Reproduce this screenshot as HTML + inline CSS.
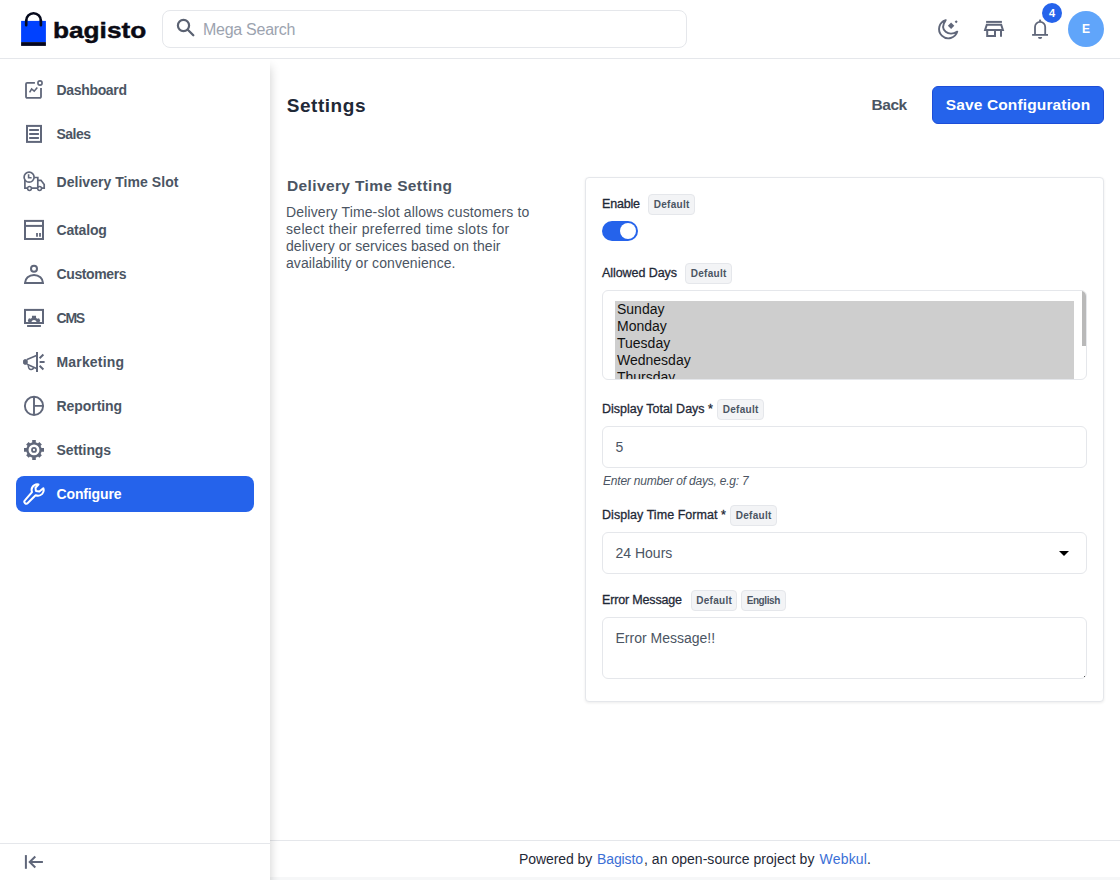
<!DOCTYPE html>
<html lang="en">
<head>
<meta charset="utf-8">
<title>Configure</title>
<style>
*{box-sizing:border-box;margin:0;padding:0}
html,body{width:1120px;height:880px;overflow:hidden;background:#fff}
body{font-family:"Liberation Sans",sans-serif;color:#1f2937;position:relative}
.abs{position:absolute}
#hdr{position:absolute;left:0;top:0;width:1120px;height:59px;background:#fff;border-bottom:1px solid #e5e7eb;z-index:5}
#logotxt{position:absolute;left:53px;top:16px;font-weight:bold;font-size:22.500px;color:#0b0b14;line-height:30px;-webkit-text-stroke:.45px #0b0b14;transform:scaleX(1.165);transform-origin:0 0;letter-spacing:0px;white-space:nowrap}
#search{position:absolute;left:162px;top:10px;width:525px;height:38px;border:1px solid #e5e7eb;border-radius:8px;background:#fff}
#search span{position:absolute;left:40px;top:9px;font-size:16px;line-height:19px;color:#9ca3af;white-space:nowrap;letter-spacing:-.27px}
#badge{position:absolute;left:1042px;top:3px;width:20px;height:20px;border-radius:50%;background:#2563eb;color:#fff;font-size:11px;font-weight:bold;line-height:20px;text-align:center}
#avatar{position:absolute;left:1068px;top:11px;width:36px;height:36px;border-radius:50%;background:#60a5fa;color:#fff;font-size:12px;font-weight:bold;line-height:36px;text-align:center}
#side{position:absolute;left:0;top:59px;width:270px;height:821px;background:#fff;box-shadow:0 8px 10px 0 rgba(0,0,0,.2);z-index:4}
.nav{position:absolute;left:16px;width:238px;height:36px;border-radius:8px}
.nav b{position:absolute;left:40.500px;top:9px;font-size:14px;line-height:18px;color:#4b5563;font-weight:bold;white-space:nowrap}
.nav svg{position:absolute;left:6px;top:5px;width:24px;height:24px}
.nav.on{background:#2563eb}
.nav.on b{color:#fff}
#sidefoot{position:absolute;left:0;top:784px;width:270px;height:37px;border-top:1px solid #e5e7eb;background:#fff}
#title{position:absolute;left:286.700px;top:94px;font-size:19px;font-weight:bold;line-height:24px;color:#1f2937;letter-spacing:.55px;white-space:nowrap}
#back{position:absolute;left:871.500px;top:95px;font-size:15.500px;font-weight:bold;line-height:20px;color:#4b5563;letter-spacing:-.45px;white-space:nowrap}
#save{position:absolute;left:932px;top:86px;width:172px;height:38px;border-radius:6px;background:#2563eb;border:1px solid #1d4ed8;color:#fff;font-size:15.500px;font-weight:bold;line-height:36px;text-align:center;white-space:nowrap;letter-spacing:.14px}
#sect{position:absolute;left:287px;top:176px;font-size:15.500px;font-weight:bold;line-height:20px;color:#4b5563;letter-spacing:.38px;white-space:nowrap}
#desc{position:absolute;left:286px;top:204px;width:280px;font-size:14px;line-height:17px;color:#4b5563;white-space:nowrap}
#desc span{display:block}
#card{position:absolute;left:585px;top:177px;width:519px;height:525px;border:1px solid #e5e7eb;border-radius:4px;background:#fff;box-shadow:0 1px 3px rgba(0,0,0,.08)}
.lbl{position:absolute;left:602px;font-size:12.500px;line-height:16px;color:#1f2937;white-space:nowrap;-webkit-text-stroke:.3px #1f2937}
.tag{position:absolute;height:21px;border:1px solid #e5e7eb;background:#f3f4f6;border-radius:4px;font-size:10px;font-weight:bold;line-height:19px;color:#4b5563;text-align:center;letter-spacing:.3px;text-indent:.3px}
.inp{position:absolute;left:602px;width:485px;border:1px solid #e5e7eb;border-radius:6px;background:#fff;font-size:14px;color:#4b5563}
.inp span{position:absolute;left:12.500px;top:11px;line-height:18px;white-space:nowrap}
#lbtxt{font-size:14px;line-height:17px;color:#111;white-space:nowrap}
#hint{font-size:12px;line-height:16px;font-style:italic;color:#4b5563;white-space:nowrap;letter-spacing:-.21px}
#foot{position:absolute;left:270px;top:840px;width:850px;height:40px;border-top:1px solid #e5e7eb;background:#fff;font-size:14px;line-height:36px;color:#1f2937;white-space:nowrap}
#foot span{position:absolute;top:0}
#foot i{font-style:normal;color:#3b6fd6}
#strip{position:absolute;left:270px;top:877px;width:850px;height:3px;background:#f6f7f8}
</style>
</head>
<body>
<div id="hdr">
  <svg class="abs" style="left:14px;top:5px" width="48" height="48" viewBox="0 0 48 48">
    <path d="M12.200 20.500V15.650a7.350 7.350 0 0 1 14.700 0V20.500" fill="none" stroke="#060a1c" stroke-width="2.600" stroke-linecap="round"/>
    <rect x="7.100" y="15.900" width="24.800" height="21.200" fill="#0041ff"/>
    <rect x="7.100" y="37.100" width="24.800" height="3.800" fill="#04061f"/>
    <path d="M12.200 15.900V20.300M26.900 15.900V20.300" fill="none" stroke="#060a1c" stroke-width="2.600" stroke-linecap="round"/>
  </svg>
  <div id="logotxt">bagisto</div>
  <div id="search">
    <svg class="abs" style="left:11.200px;top:5.200px" width="24" height="24" viewBox="0 0 24 24"><circle cx="9.5" cy="9.5" r="5.6" fill="none" stroke="#5b6272" stroke-width="2.2"/><path d="M13.800 13.800L19.300 19.300" stroke="#5b6272" stroke-width="2.300" stroke-linecap="round"/></svg>
    <span>Mega Search</span>
  </div>
  <svg class="abs" style="left:936px;top:17px" width="24" height="24" viewBox="0 0 24 24" fill="none" stroke="#60677a" stroke-width="1.9" stroke-linejoin="round"><path d="M9.700 3.100A9.300 9.300 0 1 0 21.300 14.600C13 20 2.500 13.500 9.700 3.100Z"/><path d="M15.100 5.500l3.200 3.200-3.200 3.200-3.200-3.200z" fill="#60677a" stroke="none"/><path d="M20.200 3.200l1.500 1.500-1.500 1.500-1.500-1.500z" fill="#60677a" stroke="none"/></svg>
  <svg class="abs" style="left:982px;top:17px" width="24" height="24" viewBox="0 0 24 24" fill="none" stroke="#60677a" stroke-width="2"><path d="M4.100 4.900h15.800"/><path d="M4.800 7.800h14.400l1.700 5.100H3.100z"/><path d="M5.200 12.900v6h7.800v-6M19 12.900v6.900"/></svg>
  <svg class="abs" style="left:1028px;top:17px" width="24" height="24" viewBox="0 0 24 24" fill="none" stroke="#60677a" stroke-width="1.8"><path d="M7 17.900V10a5.100 5.100 0 0 1 10.200 0v7.900"/><path d="M12.100 2.600v2.200" stroke-width="2"/><path d="M4.100 17.900H20"/><path d="M10 20a2.100 2.100 0 0 0 4.200 0z" fill="#60677a" stroke="none"/></svg>
  <div id="badge">4</div>
  <div id="avatar">E</div>
</div>

<div id="side">
  <div class="nav" style="top:13px"><svg viewBox="0 0 24 24" fill="none" stroke="#60677a" stroke-width="1.8"><path d="M12.9 5.9H5.2a1.2 1.2 0 0 0-1.2 1.2v12.6a1.2 1.2 0 0 0 1.2 1.2h12.6a1.2 1.2 0 0 0 1.2-1.2V10.9"/><circle cx="18" cy="6" r="2.1" stroke-width="1.6"/><path d="M7.6 15.3l2-3.3 2.6 2.2 3.1-3.7" stroke-width="1.6"/></svg><b style="letter-spacing:-0.33px">Dashboard</b></div>
  <div class="nav" style="top:57px"><svg viewBox="0 0 24 24" fill="none" stroke="#60677a" stroke-width="2"><rect x="5" y="4.9" width="14" height="16"/><path d="M7.2 9h9.7M7.2 13h9.7M7.2 17h9.7"/></svg><b style="letter-spacing:-0.52px">Sales</b></div>
  <div class="nav" style="top:105px"><svg viewBox="0 0 24 24" fill="none" stroke="#60677a" stroke-width="1.7"><circle cx="7.1" cy="8.2" r="5"/><path d="M6.6 5.3v3.4h3" stroke-width="1.6"/><path d="M2.9 11v8.1h2.6M9.5 19.1h6.1M12 8.500h3.800v10.600M15.800 11.300h3.200l3.200 4.200v3.600h-2.600"/><circle cx="7.5" cy="19.5" r="1.9" stroke-width="1.5"/><circle cx="17.6" cy="19.5" r="1.9" stroke-width="1.5"/></svg><b style="letter-spacing:0.045px">Delivery Time Slot</b></div>
  <div class="nav" style="top:153px"><svg viewBox="0 0 24 24" fill="none" stroke="#60677a" stroke-width="2"><rect x="3" y="3.9" width="18" height="18.1"/><path d="M3 8.9h18"/><path d="M15 16v3.8M18 16v3.8" stroke-width="1.8"/></svg><b style="letter-spacing:-0.16px">Catalog</b></div>
  <div class="nav" style="top:197px"><svg viewBox="0 0 24 24" fill="none" stroke="#60677a" stroke-width="2"><circle cx="12" cy="7.8" r="3"/><path d="M3 22A9 8.1 0 0 1 21 22Z" stroke-linejoin="miter"/></svg><b style="letter-spacing:-0.39px">Customers</b></div>
  <div class="nav" style="top:241px"><svg viewBox="0 0 24 24" fill="none" stroke="#60677a" stroke-width="2"><rect x="3" y="4.9" width="18" height="13.1"/><path d="M5.1 21h13.8"/><path transform="translate(12 18) scale(1.2) translate(-12 -18)" d="M7.6 17.5l-.8-1.6 1-1.9 1.6.4.9-.7V12h3.4v1.7l.9.7 1.6-.4 1 1.9-.8 1.6h-2.3a2.1 2.1 0 0 0-4.2 0z" fill="#60677a" stroke="none"/></svg><b style="letter-spacing:-1.2px">CMS</b></div>
  <div class="nav" style="top:285px"><svg viewBox="0 0 24 24" fill="none" stroke="#60677a" stroke-width="2"><path d="M15 3.1v19.8"/><rect x="1.6" y="10.7" width="3.6" height="4.5" rx="1" fill="#60677a" stroke-width="1"/><path d="M5 10.6l9.5-4M5 15.3l9.5 4.1" stroke-width="1.6"/><path d="M6.4 16.4c-.4 2.6 1.2 4.3 2.9 4.1 1.2-.1 2-.8 2.5-1.9" stroke-width="1.5"/><path d="M17.6 9.2l3.8-3.6M17.6 13h5M17.6 16.8l3.8 3.6"/></svg><b style="letter-spacing:0.17px">Marketing</b></div>
  <div class="nav" style="top:329px"><svg viewBox="0 0 24 24" fill="none" stroke="#60677a" stroke-width="1.9"><circle cx="12" cy="12.9" r="9.1"/><path d="M12 3.8v18.2M12 12.9h9.1"/></svg><b style="letter-spacing:-0.06px">Reporting</b></div>
  <div class="nav" style="top:373px"><svg viewBox="0 0 24 24" fill="none" stroke="#60677a"><circle cx="12" cy="12.9" r="6.6" stroke-width="2.3"/><circle cx="12" cy="12.9" r="2" stroke-width="1.8"/><g stroke-width="3.6"><path d="M12 2.9v3.2M12 19.7v3.2M2 12.9h3.2M18.8 12.9h3.2"/></g><g stroke-width="3.6"><path d="M5.4 6.3l2 2M16.6 17.5l2 2M18.6 6.3l-2 2M7.4 17.5l-2 2"/></g></svg><b style="letter-spacing:-0.09px">Settings</b></div>
  <div class="nav on" style="top:417px"><svg viewBox="0 0 24 24" fill="none" stroke="#fff" stroke-width="2" stroke-linejoin="round" stroke-linecap="round"><path d="M10 11.1C9.2 8.6 10 5.6 12.5 4.1c1.3-.8 2.8-.9 4-.6l-3 3.2.4 3.3 3.5.4 3.9-3.2c.7 1.8.6 3.8-1.1 5.700-1.600 1.700-4.200 2.200-6.600 1.400L5.800 22A1.900 1.900 0 0 1 2.900 19.400Z"/></svg><b style="letter-spacing:-0.14px">Configure</b></div>
  <div id="sidefoot"><svg class="abs" style="left:22px;top:6px" width="24" height="24" viewBox="0 0 24 24" fill="none" stroke="#60677a" stroke-width="2"><path d="M3.900 5.100v13.700"/><path d="M20.900 12H8M13.300 6.500L7.700 12l5.600 5.500" stroke-linejoin="miter"/></svg></div>
</div>

<div id="title">Settings</div>
<div id="back">Back</div>
<div id="save">Save Configuration</div>
<div id="sect">Delivery Time Setting</div>
<div id="desc"><span style="letter-spacing:.14px">Delivery Time-slot allows customers to</span><span style="letter-spacing:.32px">select their preferred time slots for</span><span style="letter-spacing:.06px">delivery or services based on their</span><span style="letter-spacing:.08px">availability or convenience.</span></div>
<div id="card"></div>

<div class="lbl" style="top:196px;letter-spacing:-.19px">Enable</div>
<div class="tag" style="left:648px;top:194px;width:47px">Default</div>
<div class="abs" style="left:602px;top:221px;width:36px;height:20px;border-radius:10px;background:#2563eb"><div class="abs" style="left:18px;top:2px;width:16px;height:16px;border-radius:50%;background:#fff"></div></div>

<div class="lbl" style="top:265px;letter-spacing:-.07px">Allowed Days</div>
<div class="tag" style="left:685px;top:263px;width:47px">Default</div>
<div class="inp" id="lb" style="top:290px;height:90px;overflow:hidden">
  <div class="abs" style="left:12px;top:10px;width:459px;height:80px;background:#cecece"></div>
  <div class="abs" id="lbtxt" style="left:14px;top:10px">Sunday<br>Monday<br>Tuesday<br>Wednesday<br>Thursday</div>
  <div class="abs" style="left:479px;top:0;width:4px;height:55px;background:#b9b9b9"></div>
</div>

<div class="lbl" style="top:401px">Display Total Days *</div>
<div class="tag" style="left:717px;top:399px;width:47px">Default</div>
<div class="inp" style="top:426px;height:42px"><span>5</span></div>
<div class="abs" id="hint" style="left:603px;top:473px">Enter number of days, e.g: 7</div>

<div class="lbl" style="top:507px;letter-spacing:.05px">Display Time Format *</div>
<div class="tag" style="left:730px;top:505px;width:47px">Default</div>
<div class="inp" style="top:532px;height:42px"><span>24 Hours</span>
  <svg class="abs" style="left:455px;top:17px" width="12" height="7" viewBox="0 0 12 7"><path d="M1 1 H11 L6 6 Z" fill="#000"/></svg>
</div>

<div class="lbl" style="top:592px;letter-spacing:-.16px">Error Message</div>
<div class="tag" style="left:691px;top:590px;width:46px">Default</div>
<div class="tag" style="left:741px;top:590px;width:45px;letter-spacing:-.4px;text-indent:-.4px">English</div>
<div class="inp" style="top:617px;height:62px"><span>Error Message!!</span><div class="abs" style="left:481px;top:58px;width:1px;height:1px;background:#555"></div></div>

<div id="foot"><span style="left:249px;letter-spacing:-.07px">Powered by</span><span style="left:327px;letter-spacing:-.1px"><i>Bagisto</i></span><span style="left:374px;letter-spacing:.03px">, an open-source project by</span><span style="left:549.500px;letter-spacing:.2px"><i>Webkul</i></span><span style="left:597px">.</span></div>
<div id="strip"></div>
</body>
</html>
